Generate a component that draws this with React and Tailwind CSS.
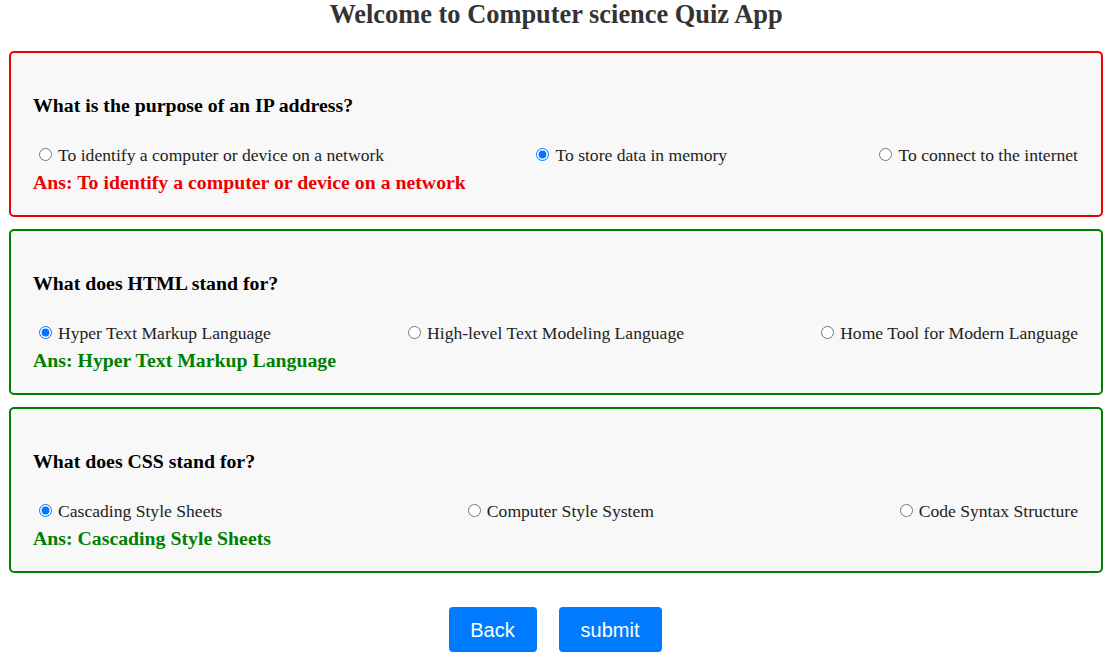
import React from 'react';

const questions = [
    {
        q: 'What is the purpose of an IP address?',
        options: ['To identify a computer or device on a network', 'To store data in memory', 'To connect to the internet'],
        picked: 1,
        answer: 'To identify a computer or device on a network',
    },
    {
        q: 'What does HTML stand for?',
        options: ['Hyper Text Markup Language', 'High-level Text Modeling Language', 'Home Tool for Modern Language'],
        picked: 0,
        answer: 'Hyper Text Markup Language',
    },
    {
        q: 'What does CSS stand for?',
        options: ['Cascading Style Sheets', 'Computer Style System', 'Code Syntax Structure'],
        picked: 0,
        answer: 'Cascading Style Sheets',
    },
];

const App = () => {
    return (
        <div className="min-h-screen bg-white font-['Liberation_Serif',serif] text-black">
            <h1 className="text-center text-[26.4px] leading-[28px] font-bold text-[#333]">
                Welcome to Computer science Quiz App
            </h1>
            <div className="flex flex-col gap-[12px] px-[9px] mt-[23px]">
                {questions.map((item, i) => {
                    const correct = item.options[item.picked] === item.answer;
                    return (
                        <div
                            key={i}
                            className={`h-[166px] rounded-[5px] border-2 bg-[#f8f8f8] pl-[22px] pr-[23px] pt-[41px] ${correct ? 'border-[#008000]' : 'border-[#e00]'}`}
                        >
                            <h3 className="text-[19.8px] leading-[23px] font-bold">{item.q}</h3>
                            <div className="flex justify-between mt-[28px] text-[17.6px] leading-[20px] text-[#222]">
                                {item.options.map((opt, j) => (
                                    <label key={j} className="flex items-center">
                                        <input
                                            type="radio"
                                            name={`q${i}`}
                                            defaultChecked={j === item.picked}
                                            className="w-[13px] h-[13px] ml-[6px] mr-[6px] -mt-[2px] accent-[#0075ff]"
                                        />
                                        {opt}
                                    </label>
                                ))}
                            </div>
                            <div className={`mt-[6px] text-[19.8px] leading-[23px] font-bold ${correct ? 'text-[#008000]' : 'text-[#e00]'}`}>
                                Ans: {item.answer}
                            </div>
                        </div>
                    );
                })}
            </div>
            <div className="flex justify-center gap-[22px] mt-[34px] pr-[2px] font-['Liberation_Sans',sans-serif]">
                <button className="h-[45px] w-[88px] rounded-[4px] bg-[#007bff] text-white text-[20px]">Back</button>
                <button className="h-[45px] w-[103px] rounded-[4px] bg-[#007bff] text-white text-[20px]">submit</button>
            </div>
        </div>
    );
};

export default App;
